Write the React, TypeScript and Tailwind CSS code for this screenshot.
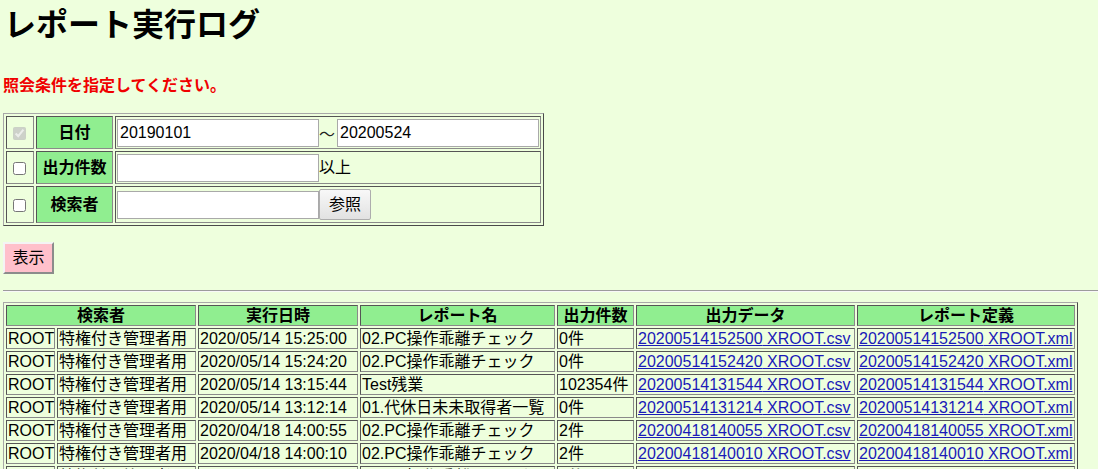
import React from 'react';

type LogRow = {
  user: string;
  role: string;
  executedAt: string;
  reportName: string;
  count: string;
  stamp: string;
};

const rows: LogRow[] = [
  { user: 'ROOT', role: '特権付き管理者用', executedAt: '2020/05/14 15:25:00', reportName: '02.PC操作乖離チェック', count: '0件', stamp: '20200514152500' },
  { user: 'ROOT', role: '特権付き管理者用', executedAt: '2020/05/14 15:24:20', reportName: '02.PC操作乖離チェック', count: '0件', stamp: '20200514152420' },
  { user: 'ROOT', role: '特権付き管理者用', executedAt: '2020/05/14 13:15:44', reportName: 'Test残業', count: '102354件', stamp: '20200514131544' },
  { user: 'ROOT', role: '特権付き管理者用', executedAt: '2020/05/14 13:12:14', reportName: '01.代休日未未取得者一覧', count: '0件', stamp: '20200514131214' },
  { user: 'ROOT', role: '特権付き管理者用', executedAt: '2020/04/18 14:00:55', reportName: '02.PC操作乖離チェック', count: '2件', stamp: '20200418140055' },
  { user: 'ROOT', role: '特権付き管理者用', executedAt: '2020/04/18 14:00:10', reportName: '02.PC操作乖離チェック', count: '2件', stamp: '20200418140010' },
  { user: 'ROOT', role: '特権付き管理者用', executedAt: '2020/04/18 13:59:42', reportName: '02.PC操作乖離チェック', count: '2件', stamp: '20200418135942' },
];

// old-school border=1 table look
const tableBorder = 'border border-t-[#a8a8a8] border-l-[#a8a8a8] border-r-[#4a4a4a] border-b-[#4a4a4a]';
const cellBorder = 'border border-t-[#555] border-l-[#555] border-r-[#8a8a8a] border-b-[#8a8a8a]';

export default function App() {
  return (
    <div className="min-h-screen bg-[#eeffdd] pl-[3px] pt-[1px] text-black font-['Liberation_Sans','Noto_Sans_CJK_JP',sans-serif]">
      <h1 className="mt-[5px] text-[32px] font-bold leading-[38px] pl-[1px]">レポート実行ログ</h1>

      <p className="mt-[32px] text-[16px] font-bold leading-[20px] text-[#f00000]">照会条件を指定してください。</p>

      {/* Search conditions */}
      <table className={`mt-[17px] w-[541px] border-separate border-spacing-[2px] ${tableBorder}`}>
        <tbody>
          <tr className="h-[33px]">
            <td className={`w-[29px] p-[1px] text-center align-middle ${cellBorder}`}>
              <input type="checkbox" defaultChecked disabled className="h-[13px] w-[13px] align-middle" />
            </td>
            <td className={`w-[78px] bg-[#90ee90] p-[1px] text-center text-[16px] font-bold ${cellBorder}`}>日付</td>
            <td className={`w-[424px] p-[1px] ${cellBorder}`}>
              <div className="flex items-center">
                <input
                  type="text"
                  defaultValue="20190101"
                  className="h-[28px] w-[202px] border border-[#a9a9a9] bg-white px-[2px] text-[16px] outline-none"
                />
                <span className="w-[18px] text-[16px] leading-none text-[#222] font-['Noto_Sans_CJK_JP',sans-serif]">～</span>
                <input
                  type="text"
                  defaultValue="20200524"
                  className="h-[28px] w-[202px] border border-[#a9a9a9] bg-white px-[2px] text-[16px] outline-none"
                />
              </div>
            </td>
          </tr>
          <tr className="h-[33px]">
            <td className={`p-[1px] text-center align-middle ${cellBorder}`}>
              <input type="checkbox" className="h-[13px] w-[13px] align-middle" />
            </td>
            <td className={`bg-[#90ee90] p-[1px] text-center text-[16px] font-bold whitespace-nowrap ${cellBorder}`}>出力件数</td>
            <td className={`p-[1px] ${cellBorder}`}>
              <div className="flex items-center">
                <input
                  type="text"
                  className="h-[28px] w-[202px] border border-[#a9a9a9] bg-white px-[2px] text-[16px] outline-none"
                />
                <span className="text-[16px]">以上</span>
              </div>
            </td>
          </tr>
          <tr className="h-[37px]">
            <td className={`p-[1px] text-center align-middle ${cellBorder}`}>
              <input type="checkbox" className="h-[13px] w-[13px] align-middle" />
            </td>
            <td className={`bg-[#90ee90] p-[1px] text-center text-[16px] font-bold ${cellBorder}`}>検索者</td>
            <td className={`p-[1px] ${cellBorder}`}>
              <div className="flex items-center">
                <input
                  type="text"
                  className="h-[28px] w-[202px] border border-[#a9a9a9] bg-white px-[2px] text-[16px] outline-none"
                />
                <button className="h-[31px] w-[52px] rounded-[2px] border border-[#adadad] bg-gradient-to-b from-[#f8f8f8] to-[#e2e2e2] text-[16px]">
                  参照
                </button>
              </div>
            </td>
          </tr>
        </tbody>
      </table>

      <button className="mt-[16px] block h-[32px] w-[51px] border-2 border-t-[#f4f4f4] border-l-[#f4f4f4] border-r-[#8c8c8c] border-b-[#8c8c8c] bg-[#ffc0cb] text-[16px]">
        表示
      </button>

      <hr className="mt-[16px] border-0 border-t border-t-[#9c9c9c] border-b border-b-[#f8f8f8]" />

      {/* Results */}
      <table className={`mt-[10px] w-[1075px] table-fixed border-separate border-spacing-[2px] text-[16px] leading-[19px] ${tableBorder}`}>
        <colgroup>
          <col className="w-[49px]" />
          <col className="w-[139px]" />
          <col className="w-[160px]" />
          <col className="w-[195px]" />
          <col className="w-[77px]" />
          <col className="w-[219px]" />
          <col className="w-[218px]" />
        </colgroup>
        <thead>
          <tr>
            <th colSpan={2} className={`bg-[#90ee90] p-0 font-bold ${cellBorder}`}>検索者</th>
            <th className={`bg-[#90ee90] p-0 font-bold ${cellBorder}`}>実行日時</th>
            <th className={`bg-[#90ee90] p-0 font-bold ${cellBorder}`}>レポート名</th>
            <th className={`bg-[#90ee90] p-0 font-bold whitespace-nowrap ${cellBorder}`}>出力件数</th>
            <th className={`bg-[#90ee90] p-0 font-bold ${cellBorder}`}>出力データ</th>
            <th className={`bg-[#90ee90] p-0 font-bold ${cellBorder}`}>レポート定義</th>
          </tr>
        </thead>
        <tbody>
          {rows.map((r) => (
            <tr key={r.stamp}>
              <td className={`px-[1px] py-0 whitespace-nowrap ${cellBorder}`}>{r.user}</td>
              <td className={`px-[1px] py-0 whitespace-nowrap ${cellBorder}`}>{r.role}</td>
              <td className={`px-[1px] py-0 whitespace-nowrap ${cellBorder}`}>{r.executedAt}</td>
              <td className={`px-[1px] py-0 whitespace-nowrap ${cellBorder}`}>{r.reportName}</td>
              <td className={`px-[1px] py-0 whitespace-nowrap ${cellBorder}`}>{r.count}</td>
              <td className={`px-[1px] py-0 whitespace-nowrap ${cellBorder}`}>
                <a href="#" className="text-[#1a1ab8] underline">{r.stamp} XROOT.csv</a>
              </td>
              <td className={`px-[1px] py-0 whitespace-nowrap ${cellBorder}`}>
                <a href="#" className="text-[#1a1ab8] underline">{r.stamp} XROOT.xml</a>
              </td>
            </tr>
          ))}
        </tbody>
      </table>
    </div>
  );
}
